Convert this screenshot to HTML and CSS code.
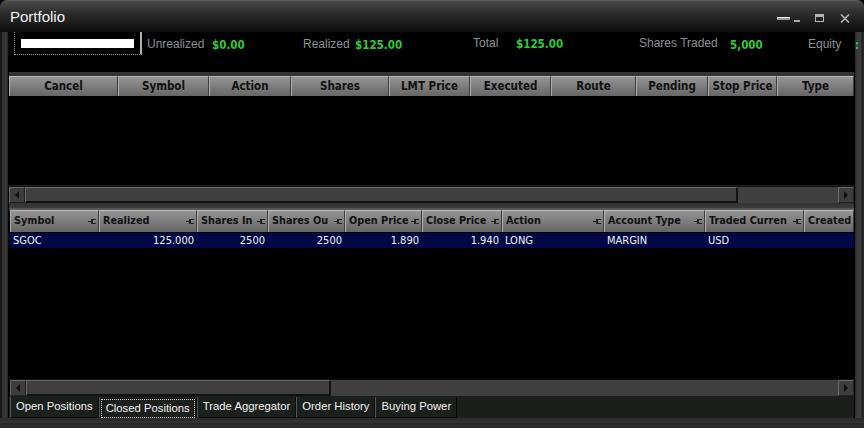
FILE: index.html
```html
<!DOCTYPE html>
<html lang="en">
<head>
  <meta charset="UTF-8">
  <title>Portfolio</title>
  <link rel="stylesheet" href="styles.css">
</head>
<body>
  <div class="window">
    <div class="titlebar">
      <span class="title">Portfolio</span>
      <div class="controls">
        <svg class="ctl-min" width="24" height="8" viewBox="0 0 24 8">
          <rect x="0" y="1" width="13" height="3" fill="#9a9a9a"/>
          <rect x="0" y="1" width="13" height="1" fill="#f0f0f0"/>
          <rect x="17" y="4" width="6" height="2" fill="#a8a8a8"/>
        </svg>
        <svg class="ctl-max" width="10" height="9" viewBox="0 0 10 9">
          <rect x="0.5" y="0.5" width="8" height="7" fill="none" stroke="#b4b4b4"/>
          <rect x="0" y="0" width="9" height="3" fill="#b4b4b4"/>
        </svg>
        <svg class="ctl-close" width="10" height="9" viewBox="0 0 10 9">
          <path d="M1 0.5 L9 8.5 M9 0.5 L1 8.5" stroke="#b4b4b4" stroke-width="1.6"/>
        </svg>
      </div>
    </div>

    <div class="frame">
      <div class="side side-left"></div>
      <div class="content">
        <div class="summary">
          <div class="account-box"><div class="account-fill"></div></div>
          <span class="label lbl-unreal">Unrealized</span><span class="value val-unreal">$0.00</span>
          <span class="label lbl-real">Realized</span><span class="value val-real">$125.00</span>
          <span class="label lbl-total">Total</span><span class="value val-total">$125.00</span>
          <span class="label lbl-shares">Shares Traded</span><span class="value val-shares">5,000</span>
          <span class="label lbl-equity">Equity</span><span class="value val-equity">:</span>
        </div>

        <div class="orders-pane">
          <div class="orders-head">
            <div class="oh">Cancel</div>
            <div class="oh">Symbol</div>
            <div class="oh">Action</div>
            <div class="oh">Shares</div>
            <div class="oh">LMT Price</div>
            <div class="oh">Executed</div>
            <div class="oh">Route</div>
            <div class="oh">Pending</div>
            <div class="oh">Stop Price</div>
            <div class="oh">Type</div>
          </div>
          <div class="grid-body orders-body"></div>
          <div class="hscroll">
            <div class="sb-btn"><span class="arrow-left"></span></div>
            <div class="sb-thumb thumb-orders"></div>
            <div class="sb-btn"><span class="arrow-right"></span></div>
          </div>
        </div>

        <div class="splitter"></div>

        <div class="closed-pane">
          <div class="closed-head">
            <div class="ch">Symbol<span class="pin"></span></div>
            <div class="ch">Realized<span class="pin"></span></div>
            <div class="ch">Shares In<span class="pin"></span></div>
            <div class="ch">Shares Ou<span class="pin"></span></div>
            <div class="ch">Open Price<span class="pin"></span></div>
            <div class="ch">Close Price<span class="pin"></span></div>
            <div class="ch">Action<span class="pin"></span></div>
            <div class="ch">Account Type<span class="pin"></span></div>
            <div class="ch">Traded Curren<span class="pin"></span></div>
            <div class="ch">Created</div>
          </div>
          <div class="grid-body closed-body">
            <div class="closed-row">
              <div class="cc">SGOC</div>
              <div class="cc num">125.000</div>
              <div class="cc num">2500</div>
              <div class="cc num">2500</div>
              <div class="cc num">1.890</div>
              <div class="cc num">1.940</div>
              <div class="cc">LONG</div>
              <div class="cc">MARGIN</div>
              <div class="cc">USD</div>
              <div class="cc"></div>
            </div>
          </div>
          <div class="hscroll">
            <div class="sb-btn"><span class="arrow-left"></span></div>
            <div class="sb-thumb thumb-closed"></div>
            <div class="sb-btn"><span class="arrow-right"></span></div>
          </div>
        </div>

        <div class="tabs">
          <div class="tab">Open Positions</div>
          <div class="tab active"><span class="focus">Closed Positions</span></div>
          <div class="tab">Trade Aggregator</div>
          <div class="tab">Order History</div>
          <div class="tab">Buying Power</div>
        </div>
      </div>
      <div class="side side-right"></div>
    </div>
    <div class="bottom-frame"></div>
  </div>
</body>
</html>
```

FILE: styles.css
```css
* {
  box-sizing: border-box;
  margin: 0;
  padding: 0;
}

body {
  width: 864px;
  height: 428px;
  background-color: #000;
  overflow: hidden;
  font-family: "DejaVu Sans Condensed", "DejaVu Sans", sans-serif;
}

.window {
  width: 864px;
  height: 428px;
  display: flex;
  flex-direction: column;
  background-color: #2b2b2b;
  border-radius: 7px 7px 0 0;
  overflow: hidden;
}

/* title bar */

.titlebar {
  height: 32px;
  flex: none;
  display: flex;
  align-items: center;
  justify-content: space-between;
  background: linear-gradient(to bottom, #4a4a4a 0%, #2c2c2c 40%, #0c0c0c 100%);
  border-top: 1px solid #5a5a5a;
  padding: 0 14px 0 10px;
}

.title {
  font-family: "Liberation Sans", Arial, sans-serif;
  font-size: 15px;
  color: #f2f2f2;
  margin-top: -1px;
}

.controls {
  display: flex;
  align-items: center;
  gap: 14px;
  margin-top: 4px;
}

.ctl-min {
  margin-top: 2px;
}

.ctl-close {
  margin-left: 1px;
}

/* window frame */

.frame {
  flex: 1;
  display: flex;
  min-height: 0;
}

.side-left {
  width: 9px;
  flex: none;
  background: linear-gradient(to right, #1a1a1a 0, #1a1a1a 2px, #303030 2px, #383838 6px, #262626 8px, #000 8px);
}

.side-right {
  width: 10px;
  flex: none;
  background: linear-gradient(to right, #000 0, #000 1px, #262626 1px, #3b3b3b 3px, #3b3b3b 7px, #1e1e1e 8px, #2a2a2a 10px);
}

.content {
  flex: 1;
  display: flex;
  flex-direction: column;
  background-color: #000;
  min-width: 0;
}

.bottom-frame {
  height: 10px;
  flex: none;
  background: linear-gradient(to bottom, #2a2a2a 0, #333 5px, #1c1c1c 6px, #303030 7px, #2a2a2a 10px);
}

/* summary line */

.summary {
  height: 40px;
  flex: none;
  position: relative;
  font-family: "Liberation Sans", Arial, sans-serif;
  font-size: 12px;
}

.account-box {
  position: absolute;
  left: 5px;
  top: 0;
  width: 128px;
  height: 23px;
  border: 1px dotted #9a9a9a;
  border-top: none;
  border-right: 2px solid #b0b0b0;
  padding: 7px 0 0 6px;
}

.account-fill {
  width: 113px;
  height: 9px;
  background-color: #fff;
}

.label,
.value {
  position: absolute;
  top: 5px;
  white-space: nowrap;
}

.label {
  color: #8c9096;
}

.value {
  color: #2fcb3a;
  font-family: "DejaVu Sans Condensed", "DejaVu Sans", sans-serif;
  font-weight: bold;
  font-size: 11.5px;
  top: 6px;
}

.lbl-unreal { left: 138px; }
.val-unreal { left: 203px; }
.lbl-real { left: 294px; }
.val-real { left: 346px; }
.lbl-total { left: 464px; top: 4px; }
.val-total { left: 507px; top: 5px; }
.lbl-shares { left: 630px; top: 4px; }
.val-shares { left: 721px; }
.lbl-equity { left: 799px; }
.val-equity { left: 846px; }

/* grids */

.orders-pane {
  flex: none;
  display: flex;
  flex-direction: column;
  border-top: 4px solid #333;
}

.orders-head {
  height: 20px;
  display: grid;
  grid-template-columns: 109px 91px 82px 98px 81px 81px 85px 72px 69px 77px;
}

.oh,
.ch {
  background: linear-gradient(to bottom, #959595 0%, #7d7d7d 50%, #666 100%);
  border-top: 1px solid #b8b8b8;
  border-left: 1px solid #b0b0b0;
  border-right: 1px solid #3c3c3c;
  color: #111;
  font-weight: bold;
  font-size: 11.5px;
  white-space: nowrap;
  overflow: hidden;
}

.oh {
  text-align: center;
  line-height: 18px;
}

.orders-body {
  height: 90px;
  border-bottom: 1px solid #1e1e1e;
}

.grid-body {
  background-color: #000;
}

.hscroll {
  height: 17px;
  display: flex;
  background-color: #404040;
  border-top: 1px solid #111;
}

.sb-btn {
  width: 16px;
  flex: none;
  border: 1px solid #6a6a6a;
  border-right-color: #222;
  border-bottom-color: #222;
  background-color: #3d3d3d;
  display: flex;
  align-items: center;
  justify-content: center;
}

.sb-btn:last-child {
  margin-left: auto;
}

.arrow-left {
  border-top: 4px solid transparent;
  border-bottom: 4px solid transparent;
  border-right: 4px solid #111;
}

.arrow-right {
  border-top: 4px solid transparent;
  border-bottom: 4px solid transparent;
  border-left: 4px solid #111;
}

.sb-thumb {
  border: 1px solid #6a6a6a;
  border-right: 2px solid #111;
  border-bottom: 2px solid #111;
  background-color: #3f3f3f;
}

.thumb-orders { width: 713px; }
.thumb-closed { width: 305px; }

.splitter {
  height: 7px;
  flex: none;
  background: linear-gradient(to bottom, #333 0, #3a3a3a 5px, #6a6a6a 6px, #505050 7px);
}

.closed-pane {
  flex: none;
  display: flex;
  flex-direction: column;
  margin-left: 1px;
}

.closed-head,
.closed-row {
  display: grid;
  grid-template-columns: 89px 98px 71px 77px 77px 80px 102px 101px 99px 50px;
}

.closed-head {
  height: 22px;
}

.ch {
  position: relative;
  text-align: left;
  line-height: 19px;
  padding-left: 3px;
  font-size: 10.8px;
}

.pin {
  position: absolute;
  right: 2px;
  top: 8px;
  width: 5px;
  height: 5px;
  border: 1px solid #222;
  border-left-width: 2px;
  border-right: none;
}

.pin::before {
  content: "";
  position: absolute;
  left: -5px;
  top: 1px;
  width: 3px;
  height: 1px;
  background-color: #222;
}

.closed-body {
  height: 147px;
}

.closed-row {
  height: 16px;
  background-color: #010845;
  border-top: 1px solid #000;
}

.cc {
  color: #f4f4f4;
  font-size: 11px;
  line-height: 15px;
  padding: 0 3px;
  white-space: nowrap;
  overflow: hidden;
}

.cc.num {
  text-align: right;
}

/* tabs */

.tabs {
  flex: 1;
  display: flex;
  align-items: flex-start;
  background-color: #1b1e1b;
  padding-top: 1px;
  font-family: "Liberation Sans", Arial, sans-serif;
  font-size: 11.3px;
}

.tab {
  height: 21px;
  line-height: 19px;
  padding: 0 5px;
  color: #f2f2f2;
  border-left: 1px solid #525852;
  border-right: 1px solid #0a0a0a;
  border-bottom: 1px solid #0a0a0a;
  background-color: #1c201d;
  white-space: nowrap;
}

.tab:first-child {
  margin-left: 1px;
}

.tab.active {
  padding: 2px 1px 0 1px;
  font-size: 11.3px;
}

.focus {
  display: inline-block;
  border: 1px dotted #d8d8d8;
  padding: 0 4px;
  line-height: 17px;
  height: 19px;
}
```
